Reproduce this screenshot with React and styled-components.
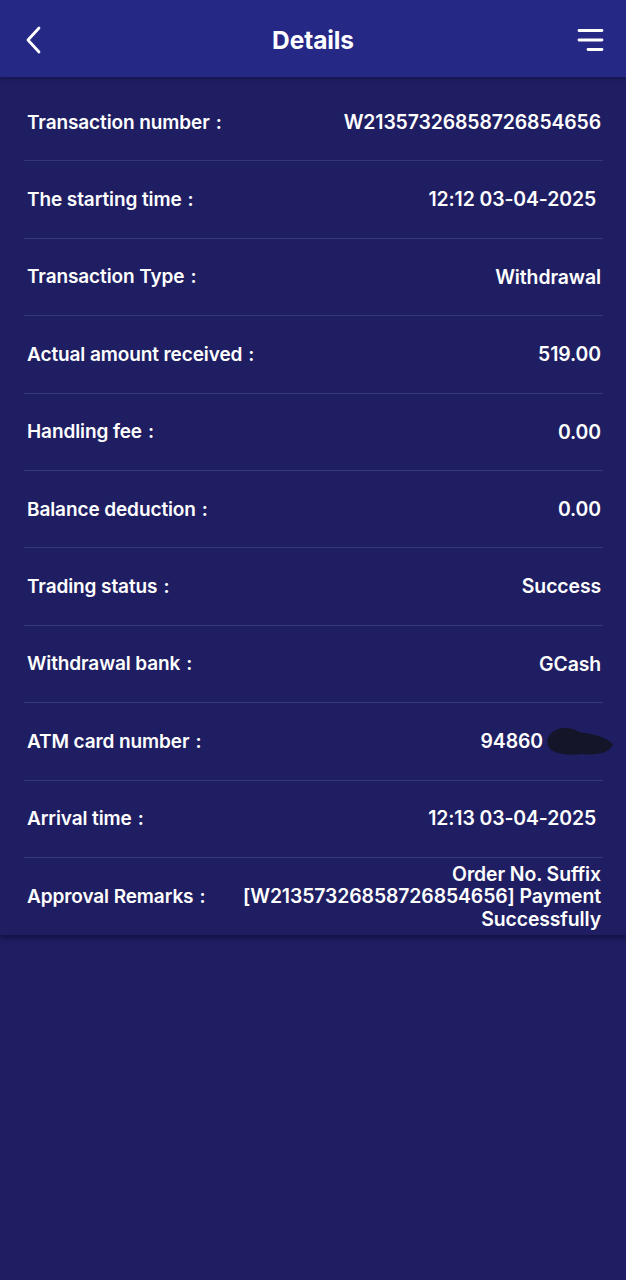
import { createGlobalStyle, styled } from "styled-components";

const GlobalStyle = createGlobalStyle`
	html, body {
		margin: 0;
		padding: 0;
		background: #1f1e62;
	}
	body {
		font-family: Inter, "Noto Sans", "Liberation Sans", sans-serif;
		color: #fff;
	}
`;

const Page = styled.div`
	min-height: 1280px;
	background: #1f1e62;
	display: flex;
	flex-direction: column;
`;

const Header = styled.header`
	height: 77px;
	background: #262886;
	display: flex;
	align-items: center;
	justify-content: space-between;
	padding: 2px 20px 0 18px;
	box-sizing: border-box;
	box-shadow: 0 2px 4px rgba(10, 10, 50, 0.45);
	position: relative;
	z-index: 1;
`;

const Title = styled.h1`
	margin: 0;
	font-size: 24.5px;
	font-weight: 700;
	letter-spacing: -0.1px;
	padding-left: 2px;
`;

const IconButton = styled.button`
	background: none;
	border: 0;
	padding: 0;
	width: 32px;
	height: 32px;
	display: grid;
	place-items: center;
	cursor: pointer;
`;

const Card = styled.section`
	background: #1f1e62;
	padding: 7px 23px 0 24px;
	box-shadow: 0 3px 5px rgba(8, 8, 40, 0.55);
`;

const Row = styled.div`
	display: flex;
	justify-content: space-between;
	align-items: center;
	gap: 24px;
	min-height: 77.4px;
	padding: 0 2px 0 3px;
	border-bottom: ${p => (p.$last ? "none" : "1px solid #34357a")};
	box-sizing: border-box;
`;

const Label = styled.span`
	font-size: 19px;
	font-weight: 600;
	white-space: nowrap;
	letter-spacing: -0.1px;
`;

const Colon = styled.span`
	margin-left: 6px;
`;

const Value = styled.span`
	font-size: 19.4px;
	font-weight: 600;
	text-align: right;
	line-height: 22.5px;
	letter-spacing: -0.1px;
	padding-right: ${p => p.$pad || 0}px;
	position: relative;
	max-width: ${p => (p.$wrap ? "362px" : "none")};
`;

const Redact = styled.svg`
	position: absolute;
	left: 64px;
	top: -8px;
`;

const rows = [
	["Transaction number", "W21357326858726854656"],
	["The starting time", "12:12 03-04-2025", 5],
	["Transaction Type", "Withdrawal"],
	["Actual amount received", "519.00"],
	["Handling fee", "0.00"],
	["Balance deduction", "0.00"],
	["Trading status", "Success"],
	["Withdrawal bank", "GCash"],
	["ATM card number", "94860", 58, true],
	["Arrival time", "12:13 03-04-2025", 5],
];

export default function App() {
	return (
		<>
			<GlobalStyle />
			<Page>
				<Header>
					<IconButton aria-label="back">
						<svg width="20" height="28" viewBox="0 0 20 28">
							<path d="M15 2 L4 14 L15 26" fill="none" stroke="#fff" strokeWidth="2.8" strokeLinecap="round" strokeLinejoin="round" />
						</svg>
					</IconButton>
					<Title>Details</Title>
					<IconButton aria-label="menu">
						<svg width="28" height="26" viewBox="0 0 28 26">
							<path d="M3 3.5 H26 M3 13 H26 M12 22.5 H26" fill="none" stroke="#fff" strokeWidth="2.8" strokeLinecap="round" />
						</svg>
					</IconButton>
				</Header>
				<Card>
					{rows.map(([label, value, pad, hidden]) => (
						<Row key={label}>
							<Label>{label}<Colon>:</Colon></Label>
							<Value $pad={pad}>
								{value}
								{hidden && (
									<Redact width="72" height="38" viewBox="0 0 72 38">
										<path d="M4 14 C10 4 26 4 34 10 C46 12 60 14 68 22 C66 30 52 34 38 32 C26 34 12 32 6 28 C2 24 1 18 4 14 Z" fill="#15152a" />
									</Redact>
								)}
							</Value>
						</Row>
					))}
					<Row $last>
						<Label>Approval Remarks<Colon>:</Colon></Label>
						<Value $wrap>Order No. Suffix [W21357326858726854656] Payment Successfully</Value>
					</Row>
				</Card>
			</Page>
		</>
	);
}
